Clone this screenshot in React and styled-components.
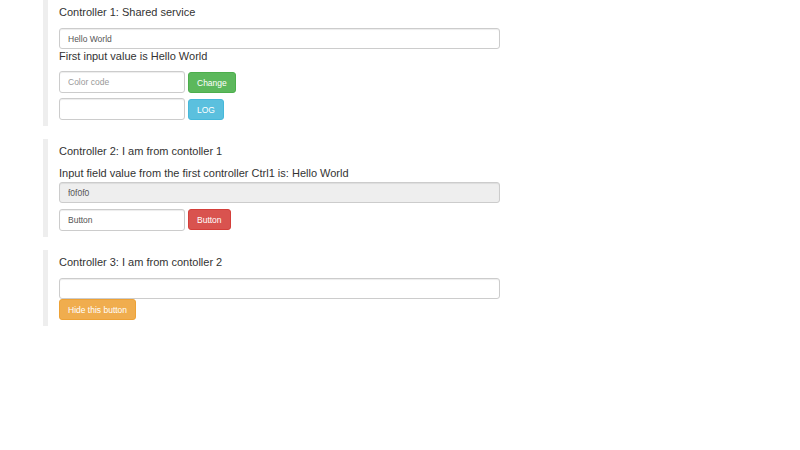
import React, { useState } from 'react';
import styled, { createGlobalStyle } from 'styled-components';

const GlobalStyle = createGlobalStyle`
  body {
    margin: 0;
    background: #fff;
    font-family: "Liberation Sans", Arial, sans-serif;
    color: #333;
  }
`;

const Page = styled("div")`
  padding-left: 43px;
  width: 457px;
`;

const Quote = styled("div")`
  border-left: 5px solid #eee;
  padding: 6px 0 6px 11px;
  margin-bottom: 13px;
`;

const Title = styled("h4")`
  font-size: 11px;
  font-weight: normal;
  line-height: 13px;
  margin: 0 0 9px;
`;

const Text = styled("p")`
  font-size: 11px;
  line-height: 13px;
  margin: 0 0 ${(p) => p.gap || 0}px;
`;

const Input = styled("input")`
  box-sizing: border-box;
  display: block;
  width: ${(p) => (p.small ? "126px" : "100%")};
  height: ${(p) => (p.small ? "22px" : "21px")};
  padding: 0 8px;
  border: 1px solid #ccc;
  border-radius: 3px;
  box-shadow: inset 0 1px 1px rgba(0, 0, 0, 0.075);
  background: ${(p) => (p.disabled ? "#eee" : "#fff")};
  color: #555;
  font-family: "Liberation Sans", Arial, sans-serif;
  font-size: 8.5px;
  outline: none;
  &::placeholder {
    color: #999;
  }
`;

const Row = styled("div")`
  display: flex;
  align-items: flex-start;
  gap: 3px;
  margin-top: ${(p) => p.top || 0}px;
  margin-bottom: ${(p) => p.gap || 0}px;
`;

const colors = {
  success: ["#5cb85c", "#4cae4c"],
  info: ["#5bc0de", "#46b8da"],
  danger: ["#d9534f", "#d43f3a"],
  warning: ["#f0ad4e", "#eea236"],
};

const Button = styled("button")`
  box-sizing: border-box;
  height: 21px;
  margin-top: ${(p) => p.top || 0}px;
  padding: 0 8px;
  border: 1px solid ${(p) => colors[p.kind][1]};
  border-radius: 3px;
  background: ${(p) => colors[p.kind][0]};
  color: #fff;
  font-family: "Liberation Sans", Arial, sans-serif;
  font-size: 8.5px;
  cursor: pointer;
`;

const App = () => {
  const [first, setFirst] = useState("Hello World");
  const [color, setColor] = useState("");
  const [log, setLog] = useState("");
  const [third, setThird] = useState("");
  const [showBtn, setShowBtn] = useState(true);

  return (
    <Page>
      <GlobalStyle />
      <Quote>
        <Title>Controller 1: Shared service</Title>
        <Input value={first} onChange={(e) => setFirst(e.target.value)} />
        <Text gap={8} style={{ marginTop: 1 }}>First input value is {first}</Text>
        <Row gap={5}>
          <Input small placeholder="Color code" value={color} onChange={(e) => setColor(e.target.value)} />
          <Button kind="success" top={1}>Change</Button>
        </Row>
        <Row>
          <Input small value={log} onChange={(e) => setLog(e.target.value)} />
          <Button kind="info" top={1}>LOG</Button>
        </Row>
      </Quote>

      <Quote>
        <Title>Controller 2: I am from contoller 1</Title>
        <Text gap={2}>Input field value from the first controller Ctrl1 is: {first}</Text>
        <Input disabled value="f0f0f0" readOnly />
        <Row top={6}>
          <Input small defaultValue="Button" />
          <Button kind="danger">Button</Button>
        </Row>
      </Quote>

      <Quote>
        <Title>Controller 3: I am from contoller 2</Title>
        <Input value={third} onChange={(e) => setThird(e.target.value)} />
        {showBtn && (
          <Row>
            <Button kind="warning" onClick={() => setShowBtn(false)}>Hide this button</Button>
          </Row>
        )}
      </Quote>
    </Page>
  );
};

export default App;
